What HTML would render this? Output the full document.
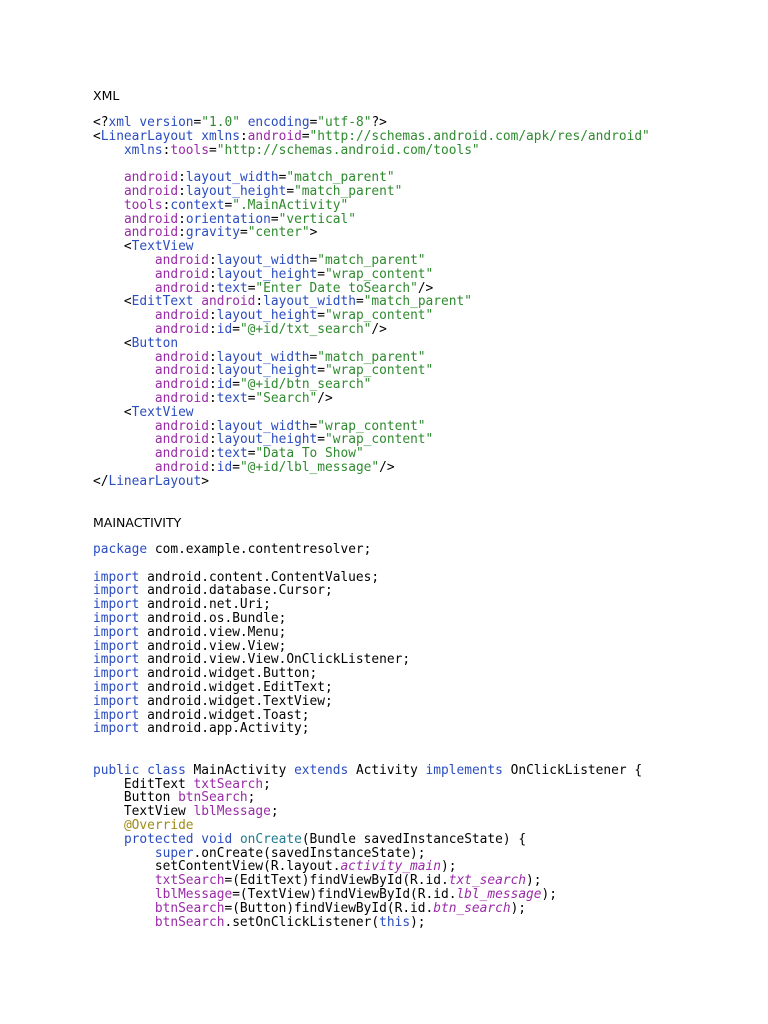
<!DOCTYPE html>
<html><head><meta charset="utf-8"><style>
html,body{margin:0;padding:0;background:#fff;width:768px;height:1024px;overflow:hidden}
.h{position:absolute;left:93px;font:12.5px "DejaVu Sans","Liberation Sans",sans-serif;color:#000;line-height:14px}
pre{position:absolute;left:93px;margin:0;font-family:"DejaVu Sans Mono","Liberation Mono",monospace;font-size:12.85px;line-height:13.8px;color:#000}
.b{color:#2a4cbf}.g{color:#2e8a2e}.p{color:#9a2aa8}.t{color:#1f7a8c}.o{color:#9e8a18}i{font-style:italic}
</style></head><body>
<div class="h" style="top:89px">XML</div>
<pre style="top:116px">&lt;?<span class="b">xml</span> <span class="b">version</span>=<span class="g">"1.0"</span> <span class="b">encoding</span>=<span class="g">"utf-8"</span>?&gt;
&lt;<span class="b">LinearLayout</span> <span class="b">xmlns</span>:<span class="p">android</span>=<span class="g">"http://schemas.android.com/apk/res/android"</span>
    <span class="b">xmlns</span>:<span class="p">tools</span>=<span class="g">"http://schemas.android.com/tools"</span>

    <span class="p">android</span>:<span class="b">layout_width</span>=<span class="g">"match_parent"</span>
    <span class="p">android</span>:<span class="b">layout_height</span>=<span class="g">"match_parent"</span>
    <span class="p">tools</span>:<span class="b">context</span>=<span class="g">".MainActivity"</span>
    <span class="p">android</span>:<span class="b">orientation</span>=<span class="g">"vertical"</span>
    <span class="p">android</span>:<span class="b">gravity</span>=<span class="g">"center"</span>&gt;
    &lt;<span class="b">TextView</span>
        <span class="p">android</span>:<span class="b">layout_width</span>=<span class="g">"match_parent"</span>
        <span class="p">android</span>:<span class="b">layout_height</span>=<span class="g">"wrap_content"</span>
        <span class="p">android</span>:<span class="b">text</span>=<span class="g">"Enter Date toSearch"</span>/&gt;
    &lt;<span class="b">EditText</span> <span class="p">android</span>:<span class="b">layout_width</span>=<span class="g">"match_parent"</span>
        <span class="p">android</span>:<span class="b">layout_height</span>=<span class="g">"wrap_content"</span>
        <span class="p">android</span>:<span class="b">id</span>=<span class="g">"@+id/txt_search"</span>/&gt;
    &lt;<span class="b">Button</span>
        <span class="p">android</span>:<span class="b">layout_width</span>=<span class="g">"match_parent"</span>
        <span class="p">android</span>:<span class="b">layout_height</span>=<span class="g">"wrap_content"</span>
        <span class="p">android</span>:<span class="b">id</span>=<span class="g">"@+id/btn_search"</span>
        <span class="p">android</span>:<span class="b">text</span>=<span class="g">"Search"</span>/&gt;
    &lt;<span class="b">TextView</span>
        <span class="p">android</span>:<span class="b">layout_width</span>=<span class="g">"wrap_content"</span>
        <span class="p">android</span>:<span class="b">layout_height</span>=<span class="g">"wrap_content"</span>
        <span class="p">android</span>:<span class="b">text</span>=<span class="g">"Data To Show"</span>
        <span class="p">android</span>:<span class="b">id</span>=<span class="g">"@+id/lbl_message"</span>/&gt;
&lt;/<span class="b">LinearLayout</span>&gt;</pre>
<div class="h" style="top:516px">MAINACTIVITY</div>
<pre style="top:543px"><span class="b">package</span> com.example.contentresolver;

<span class="b">import</span> android.content.ContentValues;
<span class="b">import</span> android.database.Cursor;
<span class="b">import</span> android.net.Uri;
<span class="b">import</span> android.os.Bundle;
<span class="b">import</span> android.view.Menu;
<span class="b">import</span> android.view.View;
<span class="b">import</span> android.view.View.OnClickListener;
<span class="b">import</span> android.widget.Button;
<span class="b">import</span> android.widget.EditText;
<span class="b">import</span> android.widget.TextView;
<span class="b">import</span> android.widget.Toast;
<span class="b">import</span> android.app.Activity;


<span class="b">public</span> <span class="b">class</span> MainActivity <span class="b">extends</span> Activity <span class="b">implements</span> OnClickListener {
    EditText <span class="p">txtSearch</span>;
    Button <span class="p">btnSearch</span>;
    TextView <span class="p">lblMessage</span>;
    <span class="o">@Override</span>
    <span class="b">protected</span> <span class="b">void</span> <span class="t">onCreate</span>(Bundle savedInstanceState) {
        <span class="b">super</span>.onCreate(savedInstanceState);
        setContentView(R.layout.<i class="p">activity_main</i>);
        <span class="p">txtSearch</span>=(EditText)findViewById(R.id.<i class="p">txt_search</i>);
        <span class="p">lblMessage</span>=(TextView)findViewById(R.id.<i class="p">lbl_message</i>);
        <span class="p">btnSearch</span>=(Button)findViewById(R.id.<i class="p">btn_search</i>);
        <span class="p">btnSearch</span>.setOnClickListener(<span class="b">this</span>);</pre>
</body></html>
